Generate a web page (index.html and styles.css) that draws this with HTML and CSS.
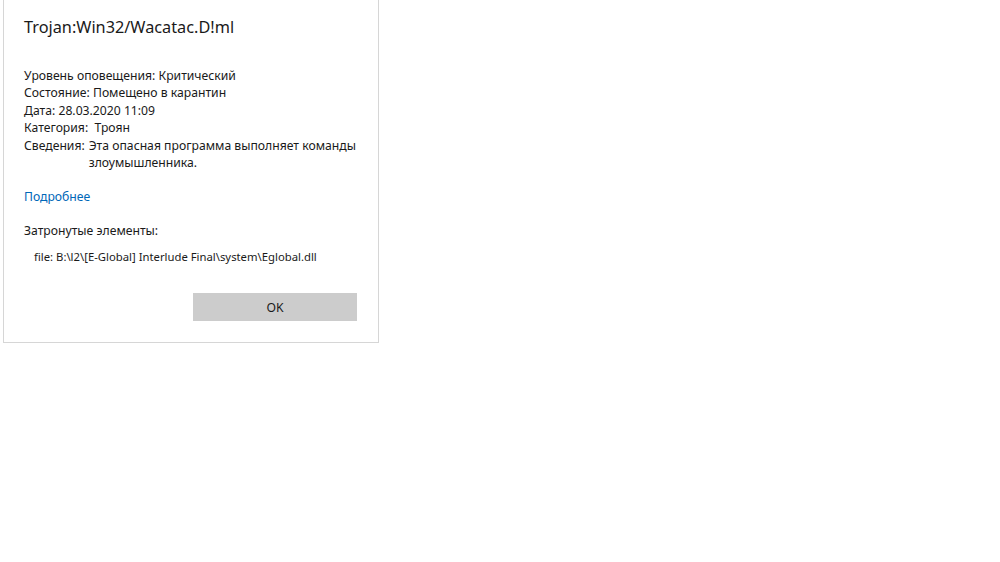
FILE: index.html
```html
<!DOCTYPE html>
<html lang="ru">
<head>
    <meta charset="UTF-8">
    <title>Trojan:Win32/Wacatac.D!ml</title>
    <link rel="stylesheet" href="styles.css">
</head>
<body>

<div class="dialog">
    <h1 class="threat-name">Trojan:Win32/Wacatac.D!ml</h1>

    <div class="details">
        <div class="row">Уровень оповещения: Критический</div>
        <div class="row">Состояние: Помещено в карантин</div>
        <div class="row">Дата: 28.03.2020 11:09</div>
        <div class="row">Категория:&nbsp; Троян</div>
        <div class="row split">
            <span class="label">Сведения:</span>
            <span class="value">Эта опасная программа выполняет команды злоумышленника.</span>
        </div>
    </div>

    <a class="more-link" href="#">Подробнее</a>

    <div class="affected-title">Затронутые элементы:</div>
    <div class="affected-item">file: B:\l2\[E-Global] Interlude Final\system\Eglobal.dll</div>

    <div class="buttons">
        <button class="ok-btn">OK</button>
    </div>
</div>

</body>
</html>
```

FILE: styles.css
```css
body, html {
    margin: 0;
    padding: 0;
    background: #ffffff;
    font-family: 'Noto Sans', 'Open Sans', sans-serif;
    color: #1a1a1a;
}

.dialog {
    width: 376px;
    height: 343px;
    margin-left: 3px;
    box-sizing: border-box;
    padding: 14px 20px 0 20px;
    border: 1px solid #d6d6d6;
    border-top: none;
}

.threat-name {
    margin: 0;
    font-size: 16.3px;
    font-weight: 400;
    line-height: 26px;
    color: #1a1a1a;
}

.details {
    margin-top: 27px;
    font-size: 12.2px;
    line-height: 17.4px;
}

.row.split {
    display: flex;
}

.row.split .label {
    flex: none;
    margin-right: 4px;
}

.more-link {
    display: inline-block;
    margin-top: 17px;
    font-size: 12.2px;
    line-height: 17px;
    color: #0067b8;
    text-decoration: none;
}

.affected-title {
    margin-top: 16px;
    font-size: 12.2px;
    line-height: 17px;
}

.affected-item {
    margin-top: 9px;
    padding-left: 10px;
    font-size: 11.3px;
    line-height: 17px;
}

.buttons {
    display: flex;
    justify-content: flex-end;
    margin-top: 28px;
}

.ok-btn {
    width: 164px;
    height: 28px;
    margin-right: 1px;
    border: none;
    background: #cccccc;
    font-family: inherit;
    font-size: 12.2px;
    color: #1a1a1a;
}
```
